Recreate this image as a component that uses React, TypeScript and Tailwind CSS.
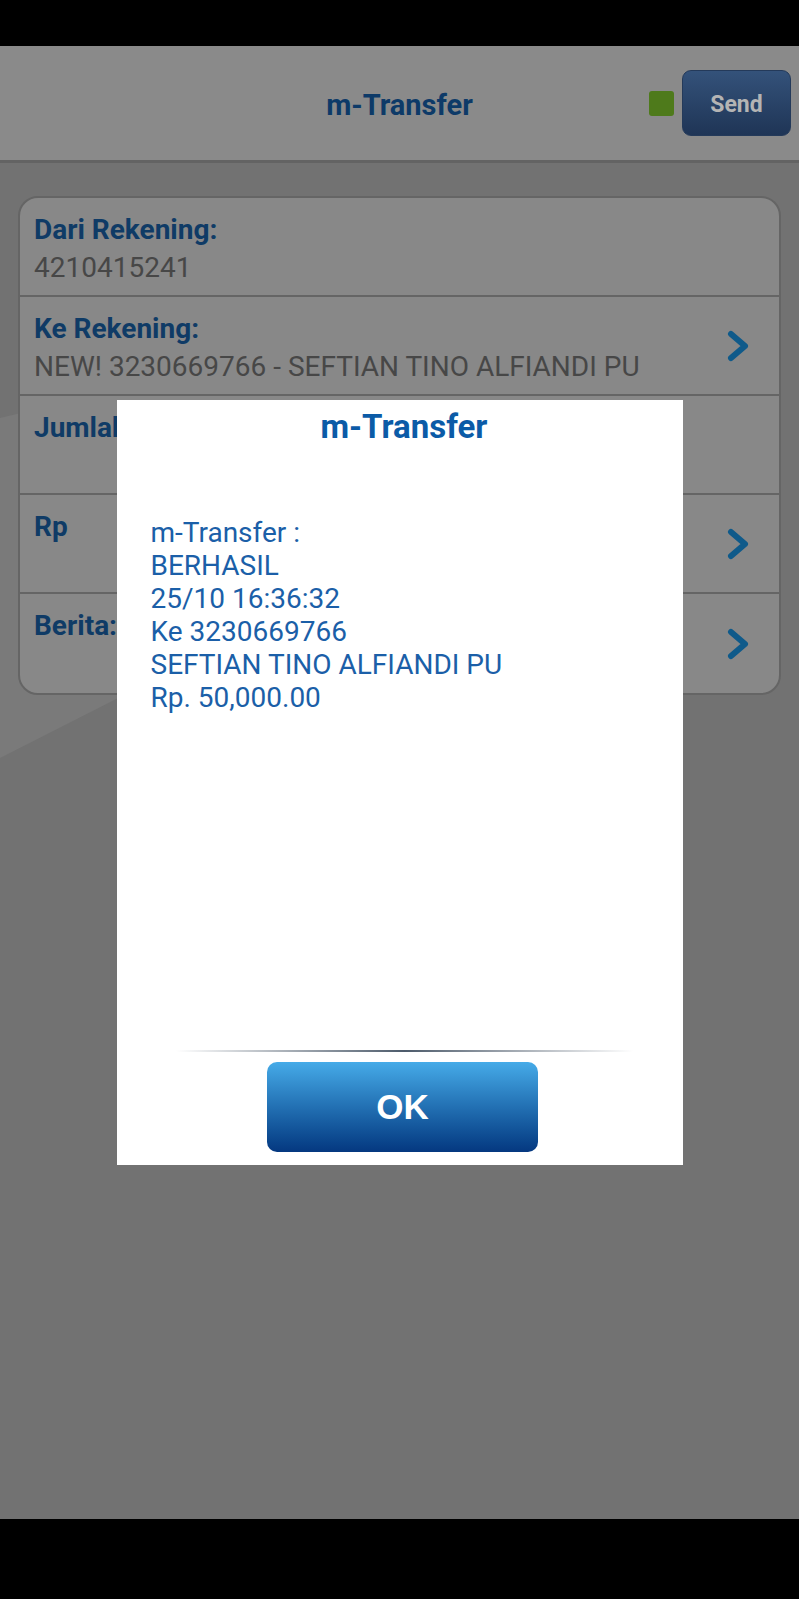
const ROWS = [
  { label: "Dari Rekening:", value: "4210415241", arrow: false },
  { label: "Ke Rekening:", value: "NEW! 3230669766 - SEFTIAN TINO ALFIANDI PU", arrow: true },
  { label: "Jumlah:", value: "", arrow: false },
  { label: "Rp", value: "", arrow: true },
  { label: "Berita:", value: "", arrow: true },
];

const MESSAGE = [
  "m-Transfer :",
  "BERHASIL",
  "25/10 16:36:32",
  "Ke 3230669766",
  "SEFTIAN TINO ALFIANDI PU",
  "Rp. 50,000.00",
];

function Chevron() {
  return (
    <svg width="22" height="32" viewBox="0 0 22 32" className="flex-shrink-0">
      <polyline
        points="4,4 18,16 4,28"
        fill="none"
        stroke="#0f5a8a"
        strokeWidth="6"
        strokeLinecap="round"
        strokeLinejoin="round"
      />
    </svg>
  );
}

function FormRow({ label, value, arrow, last }: { label: string; value: string; arrow: boolean; last: boolean }) {
  return (
    <div
      className={
        "h-[99px] flex items-center pl-[14px] pr-[30px] " +
        (last ? "" : "border-b-2 border-[#656565]")
      }
    >
      <div className="flex-1 min-w-0 self-start pt-[13px]">
        <p className="text-[28px] leading-[38px] font-bold text-[#0f3b66]">{label}</p>
        {value && <p className="text-[28px] leading-[38px] text-[#474747] whitespace-nowrap">{value}</p>}
      </div>
      {arrow && <Chevron />}
    </div>
  );
}

export default function App() {
  return (
    <div className="w-[799px] h-[1599px] flex flex-col bg-black font-['Roboto',sans-serif] overflow-hidden">
      <div className="h-[46px] bg-black flex-shrink-0" />

      <main className="relative flex-1 flex flex-col bg-[#727272] overflow-hidden">
        {/* background swoosh */}
        <svg className="absolute inset-0 w-full h-full" viewBox="0 0 799 1473" preserveAspectRatio="none">
          <polygon points="0,372 260,310 260,580 0,712" fill="#7a7a7a" />
        </svg>

        {/* Header */}
        <header className="relative h-[117px] flex-shrink-0 bg-[#8a8a8a] border-b-[3px] border-[#636363] flex items-center justify-end pr-[8px]">
          <h1 className="absolute inset-x-0 pt-[6px] text-center text-[29px] font-bold text-[#0d3a68]">m-Transfer</h1>
          <div className="relative flex items-center gap-[8px]">
            <span className="w-[25px] h-[25px] rounded-[3px] bg-[#4e7a1b]" />
            <button
              type="button"
              className="w-[109px] h-[66px] pt-[5px] rounded-[9px] bg-gradient-to-b from-[#34527a] to-[#1f3556] border border-[#243a5a] text-[23px] font-bold text-[#b4b4b4]"
            >
              Send
            </button>
          </div>
        </header>

        {/* Form card */}
        <div className="relative mx-[18px] mt-[33px] bg-[#888888] border-2 border-[#656565] rounded-[20px] overflow-hidden">
          {ROWS.map((r, i) => (
            <FormRow key={r.label} {...r} last={i === ROWS.length - 1} />
          ))}
        </div>

        {/* Dialog overlay */}
        <div className="absolute inset-0 flex items-center justify-center">
          <div className="w-[566px] h-[765px] bg-white flex flex-col">
            <h2 className="pt-[8px] pl-[9px] text-center text-[33px] leading-[38px] font-bold text-[#0b5ba7]">m-Transfer</h2>
            <div className="flex-1 pl-[34px] pt-[70px] text-[28px] leading-[33px] text-[#1b5fa8]">
              {MESSAGE.map((line) => (
                <p key={line}>{line}</p>
              ))}
            </div>
            <div className="ml-[59px] mr-[50px] h-[2px] bg-gradient-to-r from-transparent via-[#4d5b6b] to-transparent" />
            <div className="flex justify-center pt-[10px] pb-[13px] pl-[6px]">
              <button
                type="button"
                className="w-[271px] h-[90px] rounded-[10px] bg-gradient-to-b from-[#46abe8] to-[#053880] text-white text-[35px] font-bold font-['Liberation_Sans',Arial,sans-serif]"
              >
                OK
              </button>
            </div>
          </div>
        </div>
      </main>

      <div className="h-[80px] bg-black flex-shrink-0" />
    </div>
  );
}
